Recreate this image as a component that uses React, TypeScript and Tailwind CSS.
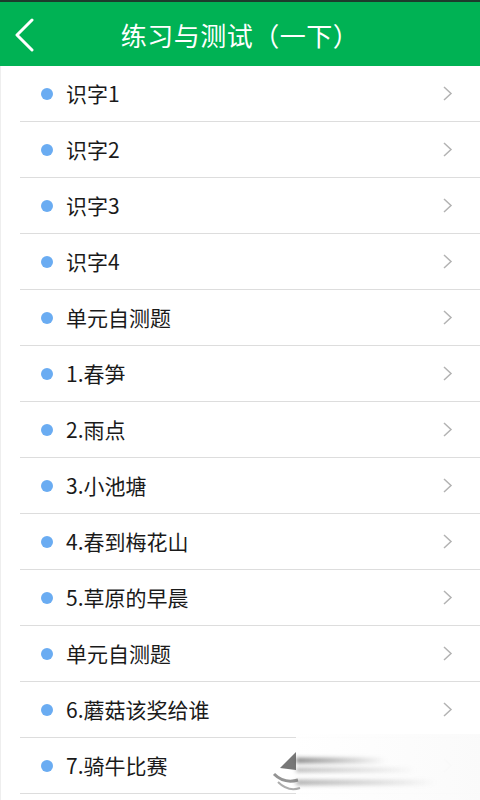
import React from "react";

const items = [
  "识字1",
  "识字2",
  "识字3",
  "识字4",
  "单元自测题",
  "1.春笋",
  "2.雨点",
  "3.小池塘",
  "4.春到梅花山",
  "5.草原的早晨",
  "单元自测题",
  "6.蘑菇该奖给谁",
  "7.骑牛比赛",
];

const font = { fontFamily: '"Noto Sans CJK SC", "Noto Sans", sans-serif' };

export default function App() {
  return (
    <div className="relative w-[480px] h-[800px] overflow-hidden bg-white" style={font}>
      <div className="h-[2px] bg-[#1d3b2c]" />
      <div className="relative h-[64px] bg-[#00b254] flex items-center justify-center">
        <svg className="absolute left-[14px] top-[16px]" width="22" height="34" viewBox="0 0 22 34">
          <path d="M18 2 L3 17 L18 32" fill="none" stroke="white" strokeWidth="3" strokeLinecap="round" strokeLinejoin="round" />
        </svg>
        <span className="text-white text-[26px] leading-none tracking-[0.5px] pt-[2px]">练习与测试（一下）</span>
      </div>
      <div className="border-l border-[#eeeeee] h-full">
        {items.map((t, i) => (
          <div key={i} className="ml-[19px] h-[56px] border-b border-[#dddddd] flex items-center">
            <span className="ml-[21px] w-[12px] h-[12px] rounded-full bg-[#6aacf2]" />
            <span className="ml-[13px] text-[21px] leading-none text-[#1a1a1a]">{t}</span>
            <svg className="ml-auto mr-[27px]" width="11" height="15" viewBox="0 0 11 15">
              <path d="M2 1 L9 7.5 L2 14" fill="none" stroke="#b3b3b3" strokeWidth="1.5" />
            </svg>
          </div>
        ))}
      </div>
      <div className="absolute left-[296px] top-[734px] w-[184px] h-[66px] bg-[linear-gradient(to_right,rgba(255,255,255,0.95),rgba(250,250,250,0.98))]">
        <div className="absolute left-0 top-[24px] w-[90px] h-[5px] blur-[2px] bg-[linear-gradient(to_right,rgba(90,90,90,0.8),rgba(200,200,200,0))]" />
        <div className="absolute left-0 top-[34px] w-[120px] h-[4px] blur-[2px] bg-[linear-gradient(to_right,rgba(120,120,120,0.6),rgba(220,220,220,0))]" />
        <div className="absolute left-0 top-[46px] w-[140px] h-[5px] blur-[2px] bg-[linear-gradient(to_right,rgba(110,110,110,0.6),rgba(220,220,220,0))]" />
      </div>
      <svg className="absolute left-[270px] top-[750px]" width="34" height="44" viewBox="0 0 34 44">
        <path d="M26 2 L10 18 L26 20 Z" fill="#555" opacity="0.8" />
        <path d="M4 24 Q14 34 28 30" fill="none" stroke="#666" strokeWidth="3" opacity="0.7" />
        <path d="M8 32 Q18 42 30 38" fill="none" stroke="#777" strokeWidth="2" opacity="0.6" />
      </svg>
    </div>
  );
}
